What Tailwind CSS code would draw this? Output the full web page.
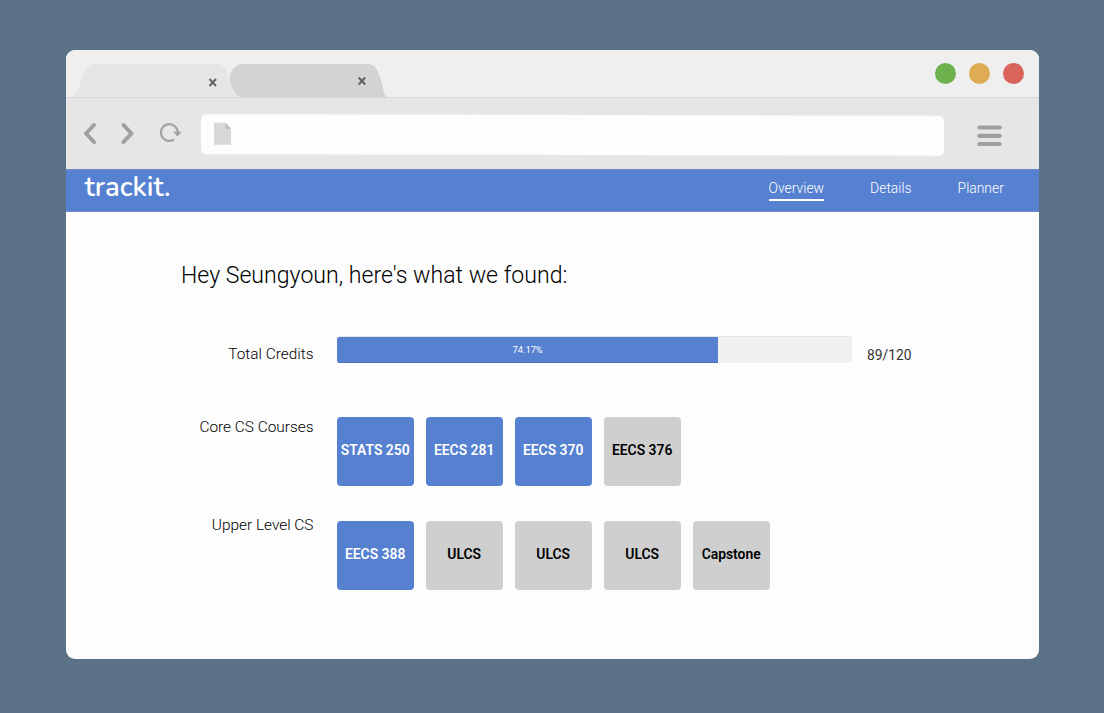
<!DOCTYPE html>
<html lang="en">
<head>
<meta charset="utf-8">
<title>trackit.</title>
<script src="https://cdn.jsdelivr.net/npm/@tailwindcss/browser@4"></script>
</head>
<body class="h-[713px] overflow-hidden bg-[#5b7185] pt-[50px] pl-[66.3px] font-['Roboto',sans-serif] text-black">
<div class="flex h-[609px] w-[972.5px] flex-col overflow-hidden rounded-[9px] bg-[#fdfdfd]">
  <!-- Tab strip -->
  <div class="flex h-[47px] shrink-0 justify-between bg-[#efefef]">
    <svg class="h-[48px] w-[340px] shrink-0" viewBox="0 0 340 48" fill="none">
      <path d="M163.500 30C163.500 22 169 14 176 14H301C309 14 311 19 314 27C317 36 318 47 321 47.500H177C170 47.500 166.500 40 163.500 30Z" fill="#d2d3d4"/>
      <path d="M4 48C15 46 15 14 28 14H151C161 14 162 26 164.500 34C167 41 168 48 176 48Z" fill="#e6e6e6"/>
      <path d="M143.500 29L150 36M150 29L143.500 36M292.700 27.500L299.200 34.500M299.200 27.500L292.700 34.500" stroke="#606060" stroke-width="1.9"/>
    </svg>
    <div class="flex gap-[13.5px] pt-[13px] pr-[15px]">
      <div class="size-[20.5px] rounded-full bg-[#6cb14c]"></div>
      <div class="size-[20.5px] rounded-full bg-[#deac54]"></div>
      <div class="size-[20.5px] rounded-full bg-[#d8645c]"></div>
    </div>
  </div>
  <!-- Toolbar -->
  <div class="flex h-[72px] shrink-0 border-t border-[#d3dbe2] bg-[#e6e6e6]">
    <svg class="h-[71px] w-[135px] shrink-0" viewBox="0 0 135 71" fill="none">
      <path d="M28 27L20 35.500L28 44M57.500 27L65.500 35.500L57.500 44" stroke="#9f9f9f" stroke-width="4" stroke-linecap="round" stroke-linejoin="round"/>
      <path d="M108 41.500A8.400 8.400 0 1 1 111.700 34" stroke="#a3a3a3" stroke-width="2.200"/>
      <path d="M107.100 33.800H115.800L111.500 38.500Z" fill="#a3a3a3"/>
    </svg>
    <div class="mt-[16.8px] h-[39.5px] w-[743px] skew-y-[0.12deg] rounded-[5px] bg-[#fdfdfd]">
      <svg class="mt-[7.5px] ml-[12.7px] h-[23px] w-[18px]" viewBox="0 0 18 23"><path d="M0 0.500H11.500L17 6.500V22.500H0Z" fill="#d8d8d8"/><path d="M11.500 0.500L17 6.500H11.500Z" fill="#bdbdbd"/></svg>
    </div>
    <svg class="mt-[27px] ml-[32.5px] h-[22px] w-[25px]" viewBox="0 0 25 22" fill="none"><path d="M2.300 2.500H22.700M2.300 10.800H22.700M2.300 19H22.700" stroke="#9f9f9f" stroke-width="4.200" stroke-linecap="round"/></svg>
  </div>
  <!-- Navigation -->
  <div class="flex h-[43px] shrink-0 justify-between border-y border-[#7187c8] bg-[#5681d1] pr-[35.2px] pl-[18.5px] text-white">
    <div class="text-[27.5px] leading-[35px] font-semibold font-['Nunito','Lato',sans-serif]">trackit.</div>
    <div class="flex gap-[46px] pt-[9px] text-[13.9px] leading-[19px] font-light">
      <div class="h-[22px] w-[55.5px] border-b-2 border-white whitespace-nowrap">Overview</div>
      <div class="w-[41.5px] whitespace-nowrap">Details</div>
      <div class="w-[46px] whitespace-nowrap">Planner</div>
    </div>
  </div>
  <!-- Overview -->
  <div class="pt-[48px]">
    <h1 class="ml-[114.7px] text-[23.1px] leading-[32px] font-light whitespace-nowrap">Hey Seungyoun, here's what we found:</h1>
    <div class="mt-[44px] flex h-[27px]">
      <div class="w-[247.2px] pt-[9px] text-right text-[15.4px] leading-[19px] font-light">Total Credits</div>
      <div class="ml-[23.3px] h-[27px] w-[515px] overflow-hidden rounded-[3px] border-t border-[#e4e4e4] bg-[#f0f0f0]">
        <div class="-mt-px flex h-[27px] items-center justify-center border-b border-[#4a70bd] bg-[#5681d1] pt-px text-[9.3px] text-white" style="width:74.1%">74.17%</div>
      </div>
      <div class="ml-[15.2px] pt-[10px] text-[13.8px] leading-[19px] font-normal text-[#333]">89/120</div>
    </div>
    <div class="mt-[54px] flex">
      <div class="w-[247.2px] text-right text-[15.4px] leading-[20px] font-light">Core CS Courses</div>
      <div class="ml-[23.2px] flex gap-[12px] text-center text-[13.9px] leading-[66px] font-semibold">
        <div class="h-[69px] w-[77px] rounded-[4px] bg-[#5681d1] text-white">STATS 250</div>
        <div class="h-[69px] w-[77px] rounded-[4px] bg-[#5681d1] text-white">EECS 281</div>
        <div class="h-[69px] w-[77px] rounded-[4px] bg-[#5681d1] text-white">EECS 370</div>
        <div class="h-[69px] w-[77px] rounded-[4px] bg-[#cfcfcf]">EECS 376</div>
      </div>
    </div>
    <div class="mt-[35px] flex">
      <div class="-mt-[6px] w-[247.2px] text-right text-[15.4px] leading-[20px] font-light">Upper Level CS</div>
      <div class="ml-[23.2px] flex gap-[12px] text-center text-[13.9px] leading-[66px] font-semibold">
        <div class="h-[69px] w-[77px] rounded-[4px] bg-[#5681d1] text-white">EECS 388</div>
        <div class="h-[69px] w-[77px] rounded-[4px] bg-[#cfcfcf]">ULCS</div>
        <div class="h-[69px] w-[77px] rounded-[4px] bg-[#cfcfcf]">ULCS</div>
        <div class="h-[69px] w-[77px] rounded-[4px] bg-[#cfcfcf]">ULCS</div>
        <div class="h-[69px] w-[77px] rounded-[4px] bg-[#cfcfcf]">Capstone</div>
      </div>
    </div>
  </div>
</div>
</body>
</html>
